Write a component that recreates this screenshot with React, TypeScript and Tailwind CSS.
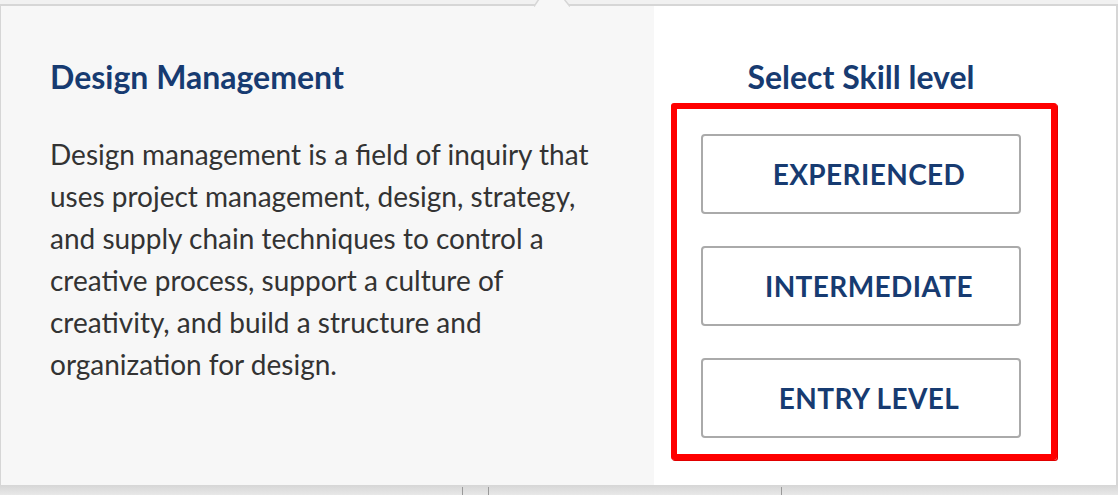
import React from "react";

export default function App() {
  const font = { fontFamily: "Lato, 'Open Sans', sans-serif" };
  const buttons = ["EXPERIENCED", "INTERMEDIATE", "ENTRY LEVEL"];
  return (
    <div className="w-[1118px] h-[495px] flex flex-col bg-[#f1f1f1] overflow-hidden relative" style={font}>
      {/* top strip */}
      <div className="h-[4px] bg-[#f1f1f1]" />
      {/* card */}
      <div className="relative flex h-[481px] border-t-[2px] border-l border-r-[2px] border-[#d6d6d6]">
        {/* arrow notch */}
        <svg className="absolute left-[533px] top-[-7px]" width="36" height="9" viewBox="0 0 36 9">
          <polygon points="0,7 6,-2 30,-2 36,7" fill="#f7f7f7" />
          <polyline points="0,7.5 5,0" stroke="#d6d6d6" strokeWidth="1.5" fill="none" />
          <polyline points="30,0 36,7.5" stroke="#d6d6d6" strokeWidth="1.5" fill="none" />
        </svg>
        {/* left */}
        <div className="w-[653px] bg-[#f7f7f7] pl-[49px] pt-[51px] pr-[20px]">
          <h2 className="text-[32px] leading-[40px] font-bold text-[#173b71]">Design Management</h2>
          <p className="mt-[36px] text-[28px] leading-[42px] text-[#333333] w-[560px]">
            Design management is a field of inquiry that uses project management, design, strategy, and supply chain techniques to control a creative process, support a culture of creativity, and build a structure and organization for design.
          </p>
        </div>
        {/* right */}
        <div className="flex-1 bg-white flex flex-col pt-[51px] pl-[17px]">
          <h2 className="text-[32px] leading-[40px] font-bold text-[#173b71] text-center w-[380px]">Select Skill level</h2>
          <div className="mt-[6px] w-[386px] h-[357px] border-[6px] border-[#ff0000] rounded-[3px] pt-[25px] pl-[24px] pr-[30px] flex flex-col gap-[32px] shadow-[1px_1px_0_#e00000]">
            {buttons.map((b) => (
              <div
                key={b}
                className="w-[320px] h-[80px] border-2 border-[#aaaaaa] rounded-[4px] flex items-center justify-center pl-[16px] text-[28px] font-bold text-[#173b71] tracking-[0.4px]"
              >
                {b}
              </div>
            ))}
          </div>
        </div>
      </div>
      {/* bottom strip */}
      <div className="relative flex-1 bg-gradient-to-b from-[#d6d6d6] to-[#e8e8e8]">
        <div className="absolute left-[462px] top-[2px] bottom-0 w-px bg-[#999999]" />
        <div className="absolute left-[488px] top-[2px] bottom-0 w-px bg-[#999999]" />
        <div className="absolute left-[781px] top-[2px] bottom-0 w-px bg-[#999999]" />
      </div>
    </div>
  );
}
